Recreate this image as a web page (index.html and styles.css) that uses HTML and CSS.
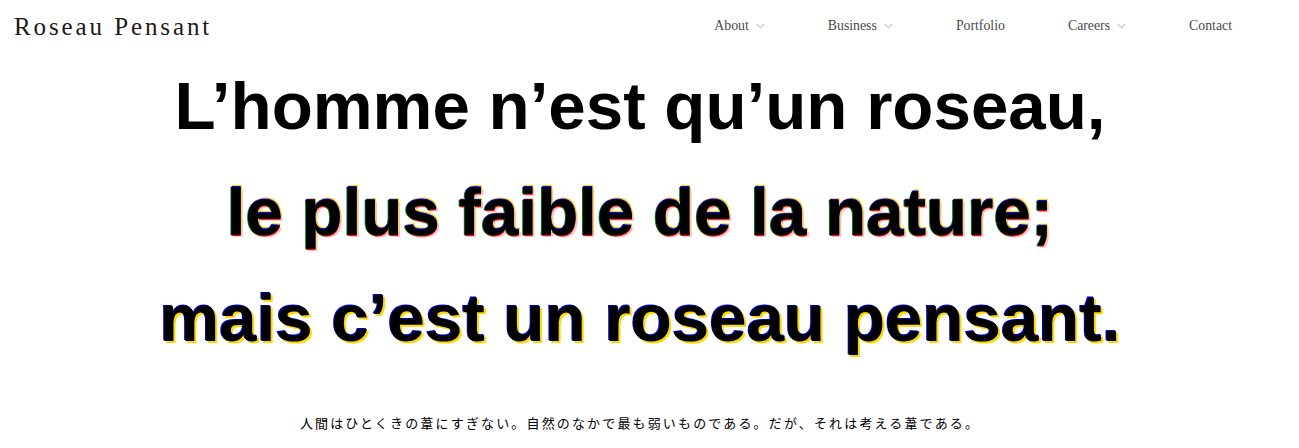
FILE: index.html
```html
<!DOCTYPE html>
<html lang="fr">
<head>
<meta charset="utf-8">
<title>Roseau Pensant</title>
<link rel="stylesheet" href="styles.css">
</head>
<body>
<header class="site-header">
  <div class="logo">Roseau Pensant</div>
  <nav class="nav">
    <a class="nav-item">About <svg class="chev" viewBox="0 0 10 6" width="9" height="6"><path d="M1 1 L5 5 L9 1" fill="none" stroke="#999" stroke-width="1"/></svg></a>
    <a class="nav-item">Business <svg class="chev" viewBox="0 0 10 6" width="9" height="6"><path d="M1 1 L5 5 L9 1" fill="none" stroke="#999" stroke-width="1"/></svg></a>
    <a class="nav-item">Portfolio</a>
    <a class="nav-item">Careers <svg class="chev" viewBox="0 0 10 6" width="9" height="6"><path d="M1 1 L5 5 L9 1" fill="none" stroke="#999" stroke-width="1"/></svg></a>
    <a class="nav-item">Contact</a>
  </nav>
</header>
<main class="hero">
  <h1 class="quote">
    <span class="line line-plain">L’homme n’est qu’un roseau,</span>
    <span class="line line-multi">le plus faible de la nature;</span>
    <span class="line line-duo">mais c’est un roseau pensant.</span>
  </h1>
  <p class="translation">人間はひとくきの葦にすぎない。自然のなかで最も弱いものである。だが、それは考える葦である。</p>
</main>
</body>
</html>
```

FILE: styles.css
```css
html, body {
  margin: 0;
  padding: 0;
  background: #fff;
}
body {
  font-family: "Liberation Serif", serif;
  color: #000;
}
.site-header {
  height: 53px;
  display: flex;
  align-items: center;
  justify-content: space-between;
  padding: 0 67px 0 14px;
}
.logo {
  font-family: "Liberation Serif", serif;
  font-size: 25px;
  letter-spacing: 2.9px;
  color: #231815;
  margin-top: 0;
}
.nav {
  display: flex;
  align-items: center;
  gap: 63px;
  margin-top: -2px;
}
.nav-item {
  font-family: "Liberation Serif", serif;
  font-size: 13.8px;
  color: #4a4a4a;
  display: flex;
  align-items: center;
  gap: 7px;
}
.chev {
  display: block;
  margin-top: 1px;
}
.hero {
  padding-right: 19px;
  text-align: center;
}
.quote {
  margin: 0;
  font-family: "Liberation Sans", Arial, sans-serif;
  font-weight: 700;
  font-size: 67.3px;
  line-height: 106px;
}
.line {
  display: block;
}
.line-multi {
  text-shadow:
    0 -1px 0 #0000ff,
    1px -2px 0 #ffd800,
    -1px 0 0 #008000,
    0 1px 0 #ff0000,
    2px 2px 0 rgba(255, 160, 170, 0.7);
}
.line-duo {
  text-shadow:
    -1px -1px 0 #0000cc,
    2px 2px 0 #ffd800;
}
.translation {
  margin: 42px 0 0;
  font-family: "Noto Sans CJK JP", sans-serif;
  font-size: 13px;
  letter-spacing: 2.15px;
  line-height: 20px;
  color: #000;
}
```
